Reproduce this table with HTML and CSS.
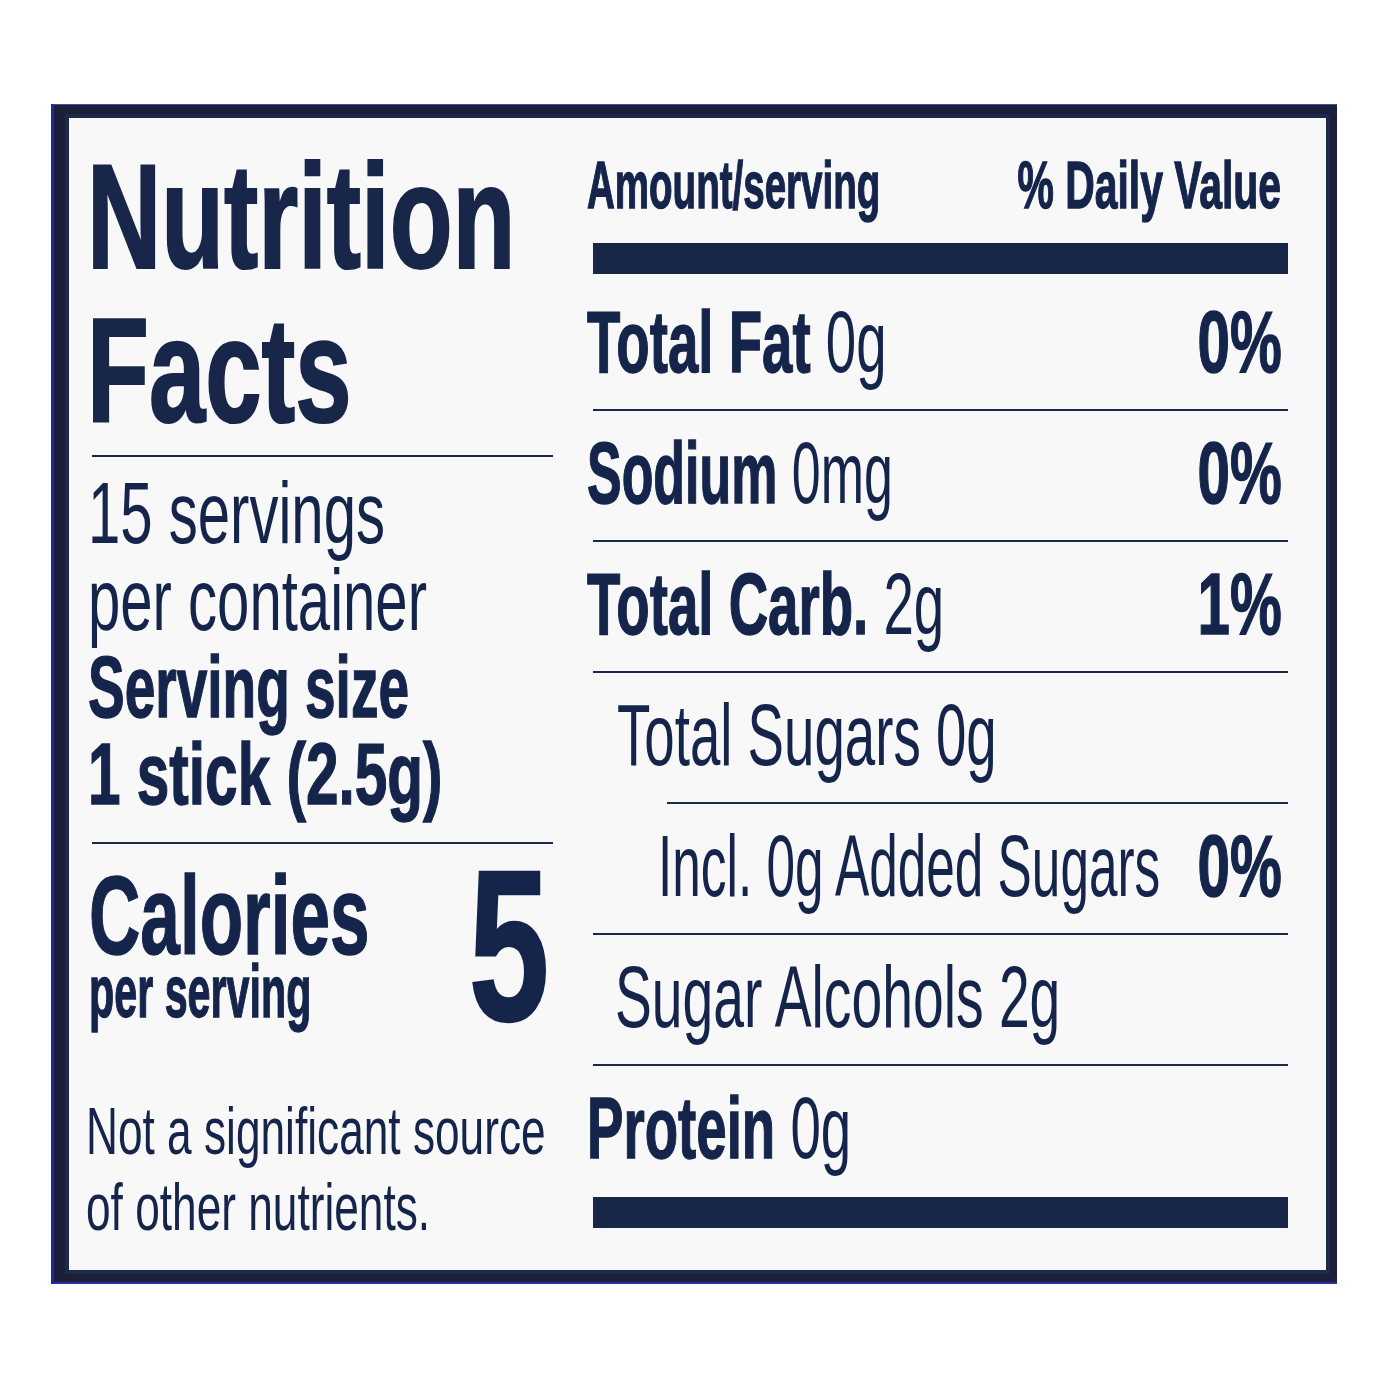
FILE: index.html
```html
<!DOCTYPE html>
<html lang="en">
<head>
<meta charset="utf-8">
<title>Nutrition Facts</title>
<link rel="stylesheet" href="styles.css">
</head>
<body>
<div class="frame">
  <div class="panel">
    <div class="left">
      <div class="title">
        <div class="tline"><span class="sx s-nut">Nutrition</span></div>
        <div class="tline"><span class="sx s-facts">Facts</span></div>
      </div>
      <div class="rule rule-first"></div>
      <div class="serving">
        <div class="sline"><span class="sx s-reg">15 servings</span></div>
        <div class="sline"><span class="sx s-reg">per container</span></div>
        <div class="sline bold"><span class="sx s-bold">Serving size</span></div>
        <div class="sline bold"><span class="sx s-bold2">1 stick (2.5g)</span></div>
      </div>
      <div class="rule rule-second"></div>
      <div class="calories">
        <div class="cal-left">
          <div class="cal-line"><span class="sx s-cal">Calories</span></div>
          <div class="per-line"><span class="sx s-per">per serving</span></div>
        </div>
        <div class="cal-num"><span class="sx sx-right s-five">5</span></div>
      </div>
      <div class="note">
        <div class="nline"><span class="sx s-note">Not a significant source</span></div>
        <div class="nline"><span class="sx s-note">of other nutrients.</span></div>
      </div>
    </div>
    <div class="right">
      <div class="head">
        <div class="lab"><span class="sx s-head">Amount/serving</span></div>
        <div class="val"><span class="sx sx-right s-head2">% Daily Value</span></div>
      </div>
      <div class="bar bar-top"></div>

      <div class="row row-first">
        <div class="lab"><span class="sx s-row"><b>Total Fat</b> 0g</span></div>
        <div class="val"><span class="sx sx-right s-pct"><b>0%</b></span></div>
      </div>
      <div class="rule"></div>

      <div class="row">
        <div class="lab"><span class="sx s-sod"><b>Sodium</b> 0mg</span></div>
        <div class="val"><span class="sx sx-right s-pct"><b>0%</b></span></div>
      </div>
      <div class="rule"></div>

      <div class="row">
        <div class="lab"><span class="sx s-row"><b>Total Carb.</b> 2g</span></div>
        <div class="val"><span class="sx sx-right s-pct"><b>1%</b></span></div>
      </div>
      <div class="rule"></div>

      <div class="row">
        <div class="lab lab-sub"><span class="sx s-row">Total Sugars 0g</span></div>
      </div>
      <div class="rule rule-indent"></div>

      <div class="row">
        <div class="lab lab-added"><span class="sx s-incl">Incl. 0g Added Sugars</span></div>
        <div class="val"><span class="sx sx-right s-pct"><b>0%</b></span></div>
      </div>
      <div class="rule"></div>

      <div class="row">
        <div class="lab lab-alc"><span class="sx s-alc">Sugar Alcohols 2g</span></div>
      </div>
      <div class="rule"></div>

      <div class="row row-last">
        <div class="lab"><span class="sx s-row"><b>Protein</b> 0g</span></div>
      </div>
      <div class="bar bar-bottom"></div>
    </div>
  </div>
</div>
</body>
</html>
```

FILE: styles.css
```css
* { box-sizing: border-box; }

html, body {
  margin: 0;
  padding: 0;
  background: #ffffff;
}

body {
  font-family: "Liberation Sans", Arial, sans-serif;
  color: #14244a;
  overflow: hidden;
}

.frame {
  margin: 104px 0 0 51px;
  width: 1286px;
  height: 1180px;
  padding: 10px 7px 10px 14px;
  background: #1b1f38;
  box-shadow: inset 3px 0 0 #2226a2, inset 0 -2px 0 #2a2ea8, inset 0 1px 0 #4a4e9a;
}

.panel {
  height: 100%;
  border: 4px solid #1c2a4c;
  background: #f8f8f8;
  padding: 22px 38px 0 23px;
  display: flex;
  gap: 40px;
  overflow: hidden;
}

.left {
  width: 461px;
  flex: none;
}

.right {
  width: 695px;
  flex: none;
}

/* horizontally condensed text */
.sx {
  display: inline-block;
  white-space: nowrap;
  transform-origin: 0 50%;
}
.sx-right { transform-origin: 100% 50%; }

b, .bold, .title, .calories, .head {
  font-weight: 700;
}
b, .bold .sx, .head .sx, .calories .sx {
  -webkit-text-stroke: 1.4px currentColor;
}

.rule {
  height: 2px;
  background: #1a2849;
}

.bar {
  height: 31px;
  background: #182648;
}

/* ---------- left column ---------- */
.title {
  font-size: 149px;
  line-height: 154px;
  margin-left: -5px;
  color: #18264a;
}
.title .sx { -webkit-text-stroke: 2.2px currentColor; }
.s-nut { transform: scaleX(0.69); }
.s-facts { transform: scaleX(0.68); }

.rule-first { margin-top: 7px; }

.serving {
  margin-top: 12px;
  font-size: 88px;
  line-height: 87px;
  margin-left: -4px;
}
.s-reg { transform: scaleX(0.66); }
.s-bold { transform: scaleX(0.625); }
.s-bold2 { transform: scaleX(0.665); }

.rule-second { margin-top: 25px; }

.calories {
  display: flex;
  align-items: flex-start;
  padding-top: 22px;
}
.cal-left {
  flex: 1;
  min-width: 0;
  margin-left: -3px;
}
.cal-line {
  font-size: 112px;
  line-height: 100px;
}
.s-cal { transform: scaleX(0.635); }
.per-line {
  font-size: 75px;
  line-height: 50px;
}
.s-per { transform: scaleX(0.55); }

.cal-num {
  flex: none;
  font-size: 216px;
  line-height: 160px;
  margin-top: -1px;
  margin-right: 4px;
}
.calories .cal-num .sx { -webkit-text-stroke: 2.4px currentColor; }
.s-five { transform: scaleX(0.67); }

.note {
  margin-top: 68px;
  margin-left: -6px;
  font-size: 66px;
  line-height: 76px;
}
.s-note { transform: scaleX(0.67); }

/* ---------- right column ---------- */
.head {
  display: flex;
  margin-top: 10px;
  font-size: 67px;
  line-height: 70px;
}
.s-head { transform: scaleX(0.575); }
.s-head2 { transform: scaleX(0.61); }

.bar-top { margin-top: 23px; }

.lab {
  flex: 1;
  min-width: 0;
  margin-left: -6px;
}
.val {
  flex: none;
  width: 0;
  display: flex;
  justify-content: flex-end;
  margin-right: 6px;
}
.head .val { margin-right: 7px; }

.row {
  display: flex;
  font-size: 87px;
  line-height: 124px;
  padding-bottom: 5px;
}
.row-first { margin-top: 6px; }
.row-last { padding-bottom: 0; }

.s-row { transform: scaleX(0.628); }
.s-sod { transform: scaleX(0.597); }
.s-alc { transform: scaleX(0.635); }
.s-incl { transform: scaleX(0.59); }
.s-pct { transform: scaleX(0.67); }

.lab-sub { margin-left: 24px; }
.lab-added { margin-left: 65px; }
.lab-alc { margin-left: 22px; }

.rule-indent { margin-left: 74px; }

.bar-bottom { margin-top: 7px; }
```
